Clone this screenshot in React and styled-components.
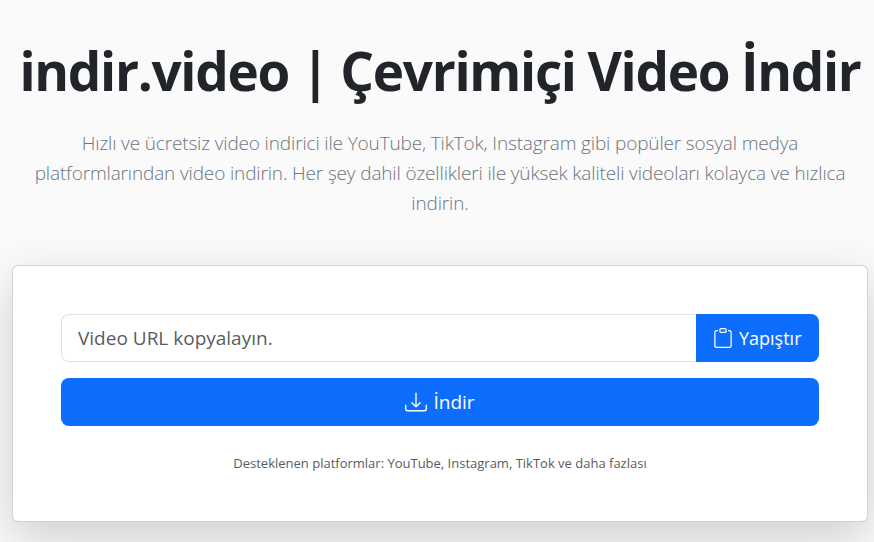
import styled, { createGlobalStyle } from "styled-components";

const GlobalStyle = createGlobalStyle`
  * {
    box-sizing: border-box;
  }
  body {
    margin: 0;
    background: #fafafb;
    font-family: "Open Sans", "Noto Sans", sans-serif;
    color: #212529;
  }
`;

function ClipboardIcon() {
  return (
    <svg width="20" height="20" viewBox="0 0 16 16" fill="currentColor">
      <path d="M4 1.5H3a2 2 0 0 0-2 2V14a2 2 0 0 0 2 2h10a2 2 0 0 0 2-2V3.5a2 2 0 0 0-2-2h-1v1h1a1 1 0 0 1 1 1V14a1 1 0 0 1-1 1H3a1 1 0 0 1-1-1V3.5a1 1 0 0 1 1-1h1z" />
      <path d="M9.5 1a.5.5 0 0 1 .5.5v1a.5.5 0 0 1-.5.5h-3a.5.5 0 0 1-.5-.5v-1a.5.5 0 0 1 .5-.5zm-3-1A1.5 1.5 0 0 0 5 1.5v1A1.5 1.5 0 0 0 6.5 4h3A1.5 1.5 0 0 0 11 2.5v-1A1.5 1.5 0 0 0 9.5 0z" />
    </svg>
  );
}

function DownloadIcon() {
  return (
    <svg width="22" height="22" viewBox="0 0 16 16" fill="currentColor">
      <path d="M.5 9.9a.5.5 0 0 1 .5.5v2.5a1 1 0 0 0 1 1h12a1 1 0 0 0 1-1v-2.5a.5.5 0 0 1 1 0v2.5a2 2 0 0 1-2 2H2a2 2 0 0 1-2-2v-2.5a.5.5 0 0 1 .5-.5" />
      <path d="M7.646 11.854a.5.5 0 0 0 .708 0l3-3a.5.5 0 0 0-.708-.708L8.5 10.293V1.5a.5.5 0 0 0-1 0v8.793L5.354 8.146a.5.5 0 1 0-.708.708z" />
    </svg>
  );
}

export default function App() {
  return (
    <>
      <GlobalStyle />
      <Page>
        <Hero>
          <Title>indir.video | Çevrimiçi Video İndir</Title>
          <Lead>
            Hızlı ve ücretsiz video indirici ile YouTube, TikTok, Instagram gibi
            popüler sosyal medya platformlarından video indirin. Her şey dahil
            özellikleri ile yüksek kaliteli videoları kolayca ve hızlıca indirin.
          </Lead>
        </Hero>
        <Card>
          <InputGroup>
            <UrlInput placeholder="Video URL kopyalayın." />
            <PasteButton>
              <ClipboardIcon />
              Yapıştır
            </PasteButton>
          </InputGroup>
          <DownloadButton>
            <DownloadIcon />
            İndir
          </DownloadButton>
          <Note>Desteklenen platformlar: YouTube, Instagram, TikTok ve daha fazlası</Note>
        </Card>
      </Page>
    </>
  );
}

const Page = styled.div`
  height: 542px;
  overflow: hidden;
  padding: 38px 6px 0 12px;
`;

const Hero = styled.header`
  text-align: center;
`;

const Title = styled.h1`
  margin: 0 0 24px;
  font-size: 53px;
  line-height: 66px;
  font-weight: 700;
  letter-spacing: -1.3px;
  word-spacing: -0.75px;
  white-space: nowrap;
  color: #212529;
`;

const Lead = styled.p`
  margin: 0 0 47px;
  padding: 0 12px;
  font-size: 19px;
  line-height: 30px;
  font-weight: 300;
  letter-spacing: -0.15px;
  color: #6c757d;
`;

const Card = styled.main`
  height: 257px;
  padding: 48px;
  background: #fff;
  border: 1px solid rgba(0, 0, 0, 0.175);
  border-radius: 6px;
  box-shadow: 0 16px 48px rgba(0, 0, 0, 0.175);
`;

const InputGroup = styled.div`
  display: flex;
  height: 48px;
  margin-bottom: 16px;
`;

const UrlInput = styled.input`
  flex: 1;
  min-width: 0;
  padding: 8px 16px;
  font: inherit;
  font-size: 19px;
  color: #212529;
  border: 1px solid #dee2e6;
  border-right: none;
  border-radius: 8px 0 0 8px;
  outline: none;
  &::placeholder {
    color: #595c5f;
  }
`;

const PasteButton = styled.button`
  display: flex;
  align-items: center;
  gap: 6px;
  width: 123px;
  padding: 0 0 0 17px;
  font: inherit;
  font-size: 18px;
  color: #fff;
  background: #0d6efd;
  border: none;
  border-radius: 0 8px 8px 0;
`;

const DownloadButton = styled.button`
  display: flex;
  align-items: center;
  justify-content: center;
  gap: 6px;
  width: 100%;
  height: 48px;
  padding-top: 1px;
  font: inherit;
  font-size: 19px;
  color: #fff;
  background: #0d6efd;
  border: none;
  border-radius: 8px;
`;

const Note = styled.p`
  margin: 27px 0 0;
  text-align: center;
  font-size: 13px;
  line-height: 20px;
  color: #595c5f;
`;
